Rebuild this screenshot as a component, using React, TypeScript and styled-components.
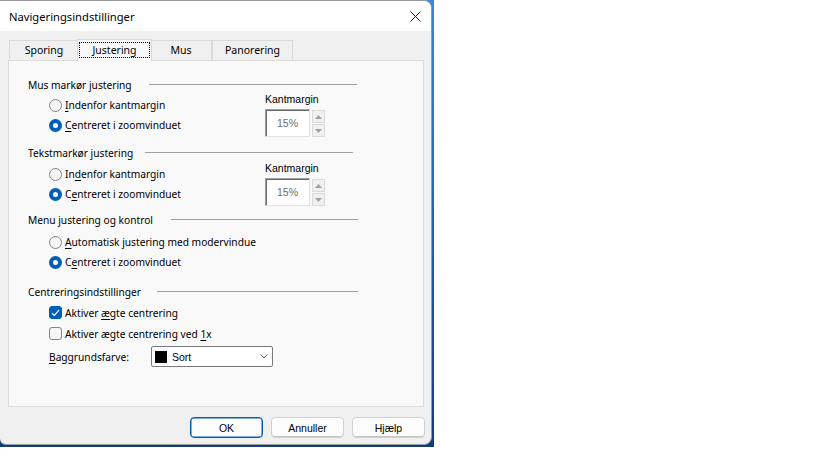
import React from 'react';
import styled, { createGlobalStyle } from 'styled-components';

const GlobalStyle = createGlobalStyle`
    html, body {
        margin: 0;
        padding: 0;
        background: #ffffff;
    }
    body {
        font-family: "Noto Sans", "Liberation Sans", sans-serif;
        font-size: 10.2px;
        color: #000;
    }
`;

const Desktop = styled.div`
    width: 434px;
    height: 447px;
    background: linear-gradient(#3a86d8, #123c7c);
    display: flex;
    align-items: flex-start;
`;

const Window = styled.div`
    width: 432px;
    height: 445px;
    box-sizing: border-box;
    background: #f0f0f0;
    border: 1px solid #9a9a9a;
    border-left: none;
    border-radius: 0 8px 8px 6px;
    overflow: hidden;
    display: flex;
    flex-direction: column;
`;

const TitleBar = styled.div`
    height: 30px;
    background: #ffffff;
    display: flex;
    align-items: center;
    justify-content: space-between;
    padding: 0 10px 0 9px;
    flex-shrink: 0;
`;

const Title = styled.span`
    font-size: 11.2px;
    color: #000;
    margin-top: 1px;
`;

const CloseButton = styled.div`
    width: 12px;
    height: 12px;
    display: flex;
    align-items: center;
    justify-content: center;
    margin-top: 1px;
`;

const Body = styled.div`
    padding: 8px 0 0 8px;
    display: flex;
    flex-direction: column;
`;

const TabStrip = styled.div`
    height: 21px;
    display: flex;
    align-items: flex-end;
    padding-left: 1px;
`;

const Tab = styled.div<{ $w: number; $active?: boolean }>`
    box-sizing: border-box;
    width: ${p => p.$w + (p.$active ? 4 : 0)}px;
    height: ${p => (p.$active ? 22 : 20)}px;
    margin: ${p => (p.$active ? '0 -2px -1px' : '0')};
    background: ${p => (p.$active ? '#f9f9f9' : '#f0f0f0')};
    border: 1px solid #d9d9d9;
    border-bottom: none;
    position: relative;
    z-index: ${p => (p.$active ? 2 : 1)};
    display: flex;
    align-items: center;
    justify-content: center;
    padding: ${p => (p.$active ? '2px 1px 3px' : '0 0 1px')};
    font-size: 10.5px;
`;

const FocusLabel = styled.span`
    flex: 1;
    align-self: stretch;
    display: flex;
    align-items: center;
    justify-content: center;
    outline: 1px dotted #000;
    outline-offset: -1px;
`;

const Panel = styled.div`
    width: 416px;
    height: 347px;
    box-sizing: border-box;
    background: #f9f9f9;
    border: 1px solid #dcdcdc;
    padding: 14px 0 0 19px;
    display: flex;
    flex-direction: column;
`;

const Group = styled.div<{ $top?: number }>`
    margin-top: ${p => p.$top ?? 0}px;
    display: flex;
    flex-direction: column;
`;

const GroupHeader = styled.div<{ $w: number; $gap?: number }>`
    width: ${p => p.$w}px;
    height: 20px;
    display: flex;
    align-items: center;
    gap: ${p => p.$gap ?? 16}px;
`;

const Rule = styled.div`
    flex: 1;
    height: 1px;
    background: #a0a0a0;
    margin-top: -2px;
`;

const GroupBody = styled.div<{ $top?: number }>`
    display: flex;
    padding-left: 21px;
    margin-top: ${p => p.$top ?? 0}px;
`;

const Options = styled.div<{ $w?: number }>`
    width: ${p => (p.$w ? `${p.$w}px` : 'auto')};
    display: flex;
    flex-direction: column;
`;

const OptionRow = styled.label<{ $h?: number }>`
    height: ${p => p.$h ?? 20}px;
    display: flex;
    align-items: center;
    gap: 3px;
    white-space: nowrap;
`;

const Key = styled.span`
    text-decoration: underline;
    text-underline-offset: 2px;
    text-decoration-thickness: 1px;
`;

const RadioDot = styled.span<{ $on?: boolean }>`
    width: 13px;
    height: 13px;
    box-sizing: border-box;
    border-radius: 50%;
    flex-shrink: 0;
    background: ${p => (p.$on ? '#ffffff' : '#f6f6f6')};
    border: ${p => (p.$on ? '4px solid #005fb8' : '1px solid #858585')};
`;

const CheckBox = styled.span<{ $on?: boolean }>`
    width: 13px;
    height: 13px;
    box-sizing: border-box;
    border-radius: 3px;
    flex-shrink: 0;
    background: ${p => (p.$on ? '#005fb8' : '#f6f6f6')};
    border: 1px solid ${p => (p.$on ? '#005fb8' : '#858585')};
    display: flex;
    align-items: center;
    justify-content: center;
`;

const Side = styled.div`
    margin: -3px 0 -5px;
    display: flex;
    flex-direction: column;
    gap: 3px;
`;

const SideLabel = styled.div`
    font-family: "Liberation Sans", sans-serif;
    font-size: 10.5px;
    line-height: 14px;
    height: 14px;
`;

const Spinner = styled.div`
    display: flex;
    gap: 2px;
`;

const SpinField = styled.div`
    width: 45px;
    height: 28px;
    box-sizing: border-box;
    background: #ffffff;
    border-top: 1px solid #a0a0a0;
    border-left: 1px solid #a0a0a0;
    border-right: 1px solid #e3e3e3;
    border-bottom: 1px solid #e3e3e3;
    box-shadow: inset 1px 1px 0 #696969;
    display: flex;
    align-items: center;
    justify-content: center;
    font-family: "Liberation Sans", sans-serif;
    font-size: 10.5px;
    color: #6d6d6d;
`;

const SpinButtons = styled.div`
    display: flex;
    flex-direction: column;
    gap: 1px;
    padding-top: 1px;
`;

const SpinButton = styled.div`
    width: 13px;
    height: 13px;
    box-sizing: border-box;
    background: #f0f0f0;
    border: 1px solid #dadada;
    display: flex;
    align-items: center;
    justify-content: center;
`;

const ComboRow = styled.div`
    margin-top: 2px;
    height: 21px;
    display: flex;
    align-items: center;
`;

const ComboLabel = styled.span`
    width: 102px;
`;

const Combo = styled.div`
    width: 122px;
    height: 21px;
    box-sizing: border-box;
    background: #ffffff;
    border: 1px solid #7a7a7a;
    border-radius: 2px;
    display: flex;
    align-items: center;
    padding: 0 4px 0 3px;
    gap: 5px;
    font-family: "Liberation Sans", sans-serif;
    font-size: 10.5px;
`;

const Swatch = styled.span<{ $color: string }>`
    width: 12px;
    height: 12px;
    background: ${p => p.$color};
`;

const ComboText = styled.span`
    flex: 1;
`;

const ButtonRow = styled.div`
    width: 417px;
    margin-top: 10px;
    display: flex;
    justify-content: flex-end;
    gap: 8px;
`;

const DialogButton = styled.div<{ $default?: boolean }>`
    width: 73px;
    height: 21px;
    box-sizing: border-box;
    border-radius: 4px;
    background: #fdfdfd;
    border: 1px solid ${p => (p.$default ? '#005fb8' : '#d0d0d0')};
    box-shadow: ${p => (p.$default ? 'inset 0 0 0 0.5px #005fb8' : 'inset 0 -1px 0 #c4c4c4')};
    display: flex;
    align-items: center;
    justify-content: center;
    font-family: "Liberation Sans", sans-serif;
    font-size: 10.5px;
    color: #000;
`;

const Triangle = ({ up }: { up?: boolean }) => (
    <svg width="7" height="4" viewBox="0 0 7 4">
        <path d={up ? 'M0 4 L3.5 0 L7 4 Z' : 'M0 0 L3.5 4 L7 0 Z'} fill="#a0a0a0" />
    </svg>
);

const Radio = ({ on, children }: { on?: boolean; children: React.ReactNode }) => (
    <OptionRow>
        <RadioDot $on={on} />
        <span>{children}</span>
    </OptionRow>
);

const Check = ({ on, children }: { on?: boolean; children: React.ReactNode }) => (
    <OptionRow $h={21}>
        <CheckBox $on={on}>
            {on && (
                <svg width="9" height="8" viewBox="0 0 9 8">
                    <path d="M1 4.2 L3.4 6.5 L8 1.2" stroke="#fff" strokeWidth="1.2" fill="none" />
                </svg>
            )}
        </CheckBox>
        <span>{children}</span>
    </OptionRow>
);

const MarginSpinner = () => (
    <Side>
        <SideLabel>Kantmargin</SideLabel>
        <Spinner>
            <SpinField>15%</SpinField>
            <SpinButtons>
                <SpinButton><Triangle up /></SpinButton>
                <SpinButton><Triangle /></SpinButton>
            </SpinButtons>
        </Spinner>
    </Side>
);

const tabs = [
    { label: 'Sporing', w: 70 },
    { label: 'Justering', w: 71, active: true },
    { label: 'Mus', w: 62 },
    { label: 'Panorering', w: 81 },
];

const App = () => {
    return (
        <>
            <GlobalStyle />
            <Desktop>
                <Window>
                    <TitleBar>
                        <Title>Navigeringsindstillinger</Title>
                        <CloseButton>
                            <svg width="11" height="11" viewBox="0 0 11 11">
                                <path d="M0.5 0.5 L10.5 10.5 M10.5 0.5 L0.5 10.5" stroke="#1a1a1a" strokeWidth="1" />
                            </svg>
                        </CloseButton>
                    </TitleBar>
                    <Body>
                        <TabStrip>
                            {tabs.map(t => (
                                <Tab key={t.label} $w={t.w} $active={t.active}>
                                    {t.active ? <FocusLabel>{t.label}</FocusLabel> : t.label}
                                </Tab>
                            ))}
                        </TabStrip>
                        <Panel>
                            <Group>
                                <GroupHeader $w={329} $gap={17}>
                                    <span>Mus markør justering</span>
                                    <Rule />
                                </GroupHeader>
                                <GroupBody>
                                    <Options $w={216}>
                                        <Radio><Key>I</Key>ndenfor kantmargin</Radio>
                                        <Radio on><Key>C</Key>entreret i zoomvinduet</Radio>
                                    </Options>
                                    <MarginSpinner />
                                </GroupBody>
                            </Group>
                            <Group $top={8}>
                                <GroupHeader $w={325} $gap={12}>
                                    <span>Tekstmarkør justering</span>
                                    <Rule />
                                </GroupHeader>
                                <GroupBody $top={1}>
                                    <Options $w={216}>
                                        <Radio>In<Key>d</Key>enfor kantmargin</Radio>
                                        <Radio on>C<Key>e</Key>ntreret i zoomvinduet</Radio>
                                    </Options>
                                    <MarginSpinner />
                                </GroupBody>
                            </Group>
                            <Group $top={6}>
                                <GroupHeader $w={330} $gap={18}>
                                    <span>Menu justering og kontrol</span>
                                    <Rule />
                                </GroupHeader>
                                <GroupBody $top={2}>
                                    <Options>
                                        <Radio><Key>A</Key>utomatisk justering med modervindue</Radio>
                                        <Radio on>C<Key>e</Key>ntreret i zoomvinduet</Radio>
                                    </Options>
                                </GroupBody>
                            </Group>
                            <Group $top={10}>
                                <GroupHeader $w={330} $gap={16}>
                                    <span>Centreringsindstillinger</span>
                                    <Rule />
                                </GroupHeader>
                                <GroupBody>
                                    <Options>
                                        <Check on>Aktiver <Key>æ</Key>gte centrering</Check>
                                        <Check>Aktiver ægte centrering ved <Key>1</Key>x</Check>
                                        <ComboRow>
                                            <ComboLabel><Key>B</Key>aggrundsfarve:</ComboLabel>
                                            <Combo>
                                                <Swatch $color="#000000" />
                                                <ComboText>Sort</ComboText>
                                                <svg width="8" height="5" viewBox="0 0 8 5">
                                                    <path d="M0.5 0.5 L4 4 L7.5 0.5" stroke="#5a5a5a" strokeWidth="1" fill="none" />
                                                </svg>
                                            </Combo>
                                        </ComboRow>
                                    </Options>
                                </GroupBody>
                            </Group>
                        </Panel>
                        <ButtonRow>
                            <DialogButton $default>OK</DialogButton>
                            <DialogButton>Annuller</DialogButton>
                            <DialogButton>Hjælp</DialogButton>
                        </ButtonRow>
                    </Body>
                </Window>
            </Desktop>
        </>
    );
};

export default App;
